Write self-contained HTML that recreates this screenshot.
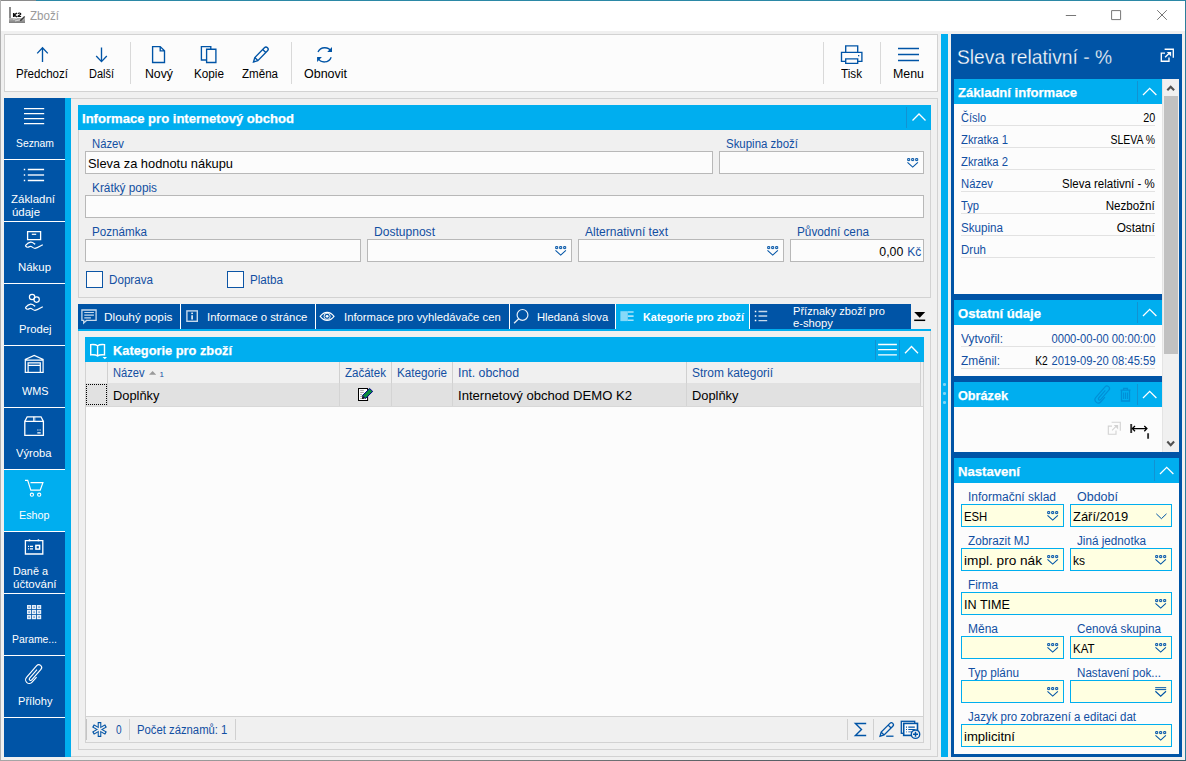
<!DOCTYPE html>
<html><head><meta charset="utf-8"><title>Zboží</title><style>html,body{margin:0;padding:0}
body{width:1186px;height:761px;overflow:hidden;position:relative;background:#f0f0f0;font-family:"Liberation Sans",sans-serif}
#w div,#w svg,#w span.t{position:absolute}
#w span.t{white-space:nowrap}
#w{position:absolute;left:0;top:0;width:1186px;height:761px;overflow:hidden}</style></head><body><div id="w"><div style="left:0px;top:0px;width:1186px;height:31px;background:#ffffff;"></div><div style="left:0px;top:0px;width:36px;height:1px;background:#8a8a8a;"></div><div style="left:36px;top:0px;width:1150px;height:1px;background:#2b88a6;"></div><div style="left:0px;top:0px;width:1px;height:761px;background:#b0b0b0;"></div><div style="left:1185px;top:0px;width:1px;height:761px;background:#2b7f9c;"></div><div style="left:0px;top:760px;width:1186px;height:1px;background:linear-gradient(90deg,#a6a6a6 0%,#8c8c8c 35%,#5c6266 60%,#3c5a68 100%);"></div><span class="t" id="t0" style="top:7.84px;font-size:12px;line-height:16px;color:#9a9a9a;left:30px;transform:scaleX(0.9662);transform-origin:0 0;">Zboží</span><svg style="left:8px;top:6px;" width="18" height="18" viewBox="0 0 18 18" fill="none"><defs><linearGradient id="kg" x1="0" y1="0" x2="0" y2="1"><stop offset="0" stop-color="#b8b8b8"/><stop offset="1" stop-color="#7c7c7c"/></linearGradient></defs><rect x="1" y="1" width="2" height="16" fill="#8a8a8a"/><rect x="1" y="12" width="16" height="5" fill="url(#kg)"/><path d="M5 13.2l4-.8M7 15l5-1.2" stroke="#e4e4e4" stroke-width=".8"/><path d="M12.3 14.8l4.4-4.4" stroke="#3a3a3a" stroke-width="1.4"/><path d="M5.700 7v4M8.900 7l-2.600 2l2.600 2" stroke="#111" stroke-width="1.500" fill="none"/><path d="M10 7.800c.5-1.100 2.800-1.100 2.800.1c0 1-2.400 1.400-2.800 2.600h3.100" stroke="#111" stroke-width="1.200" fill="none"/></svg><svg style="left:1062px;top:5px;" width="110" height="20" viewBox="0 0 110 20" fill="none"><path d="M3.800 10.500h10.300" stroke="#777" stroke-width="1"/><path d="M49.600 5.600h9v9h-9z" stroke="#777" stroke-width="1" fill="none"/><path d="M95.200 5.200l9.600 9.600M104.800 5.200l-9.600 9.600" stroke="#777" stroke-width="1"/></svg><div style="left:4px;top:34px;width:934px;height:58px;background:#fcfcfc;border:1px solid #d2d2d2;box-sizing:border-box;"></div><div style="left:130px;top:42px;width:1px;height:42px;background:#d9d9d9;"></div><div style="left:291px;top:42px;width:1px;height:42px;background:#d9d9d9;"></div><div style="left:823px;top:42px;width:1px;height:42px;background:#d9d9d9;"></div><div style="left:880px;top:42px;width:1px;height:42px;background:#d9d9d9;"></div><span class="t" id="t1" style="top:65.84px;font-size:12px;line-height:16px;color:#000;left:16px;transform:scaleX(0.9624);transform-origin:0 0;">Předchozí</span><span class="t" id="t2" style="top:65.84px;font-size:12px;line-height:16px;color:#000;left:88.5px;transform:scaleX(0.9143);transform-origin:0 0;">Další</span><span class="t" id="t3" style="top:65.84px;font-size:12px;line-height:16px;color:#000;left:145px;transform:scaleX(1.0240);transform-origin:0 0;">Nový</span><span class="t" id="t4" style="top:65.84px;font-size:12px;line-height:16px;color:#000;left:194px;transform:scaleX(0.9771);transform-origin:0 0;">Kopie</span><span class="t" id="t5" style="top:65.84px;font-size:12px;line-height:16px;color:#000;left:242px;transform:scaleX(0.9636);transform-origin:0 0;">Změna</span><span class="t" id="t6" style="top:65.84px;font-size:12px;line-height:16px;color:#000;left:303.5px;transform:scaleX(1.0397);transform-origin:0 0;">Obnovit</span><span class="t" id="t7" style="top:65.84px;font-size:12px;line-height:16px;color:#000;left:841px;transform:scaleX(0.9739);transform-origin:0 0;">Tisk</span><span class="t" id="t8" style="top:65.84px;font-size:12px;line-height:16px;color:#000;left:893px;transform:scaleX(1.0323);transform-origin:0 0;">Menu</span><svg style="left:30px;top:40px;" width="320" height="30" viewBox="0 0 320 30" fill="none"><path d="M12.5 7.6v14.3M7.2 13.4l5.3-5.6l5.3 5.6" stroke="#0054a6" stroke-width="1.35" fill="none" /><path d="M71.5 7.6v14.3M66.2 16l5.3 5.6l5.3-5.6" stroke="#0054a6" stroke-width="1.35" fill="none" /><path d="M122.6 6.6h7.6l4.3 4.2v11.7h-11.9zM130.2 6.6v4.2h4.3" stroke="#0054a6" stroke-width="1.35" fill="none" /><path d="M180.8 9v-2.4h-9.4v13.4h5M176.6 9.2h9.3v13.3h-9.3z" stroke="#0054a6" stroke-width="1.35" fill="none" /><path d="M223.5 22l1.3-4.4l9.6-9.9a2.15 2.15 0 0 1 3.1 3.1l-9.7 9.8zM224.8 17.6l3 3M232.7 9.5l3.1 3.1" stroke="#0054a6" stroke-width="1.35" fill="none" /><path d="M288 12A7.500 7.500 0 0 1 301.300 11.500M301.200 17.300A7.200 7.200 0 0 1 287.900 17.700" stroke="#0054a6" stroke-width="1.35" fill="none" /><path d="M302 7.100v4.800h-4.800z M287.100 21.900v-4.800h4.800z" fill="#0054a6"/></svg><svg style="left:836px;top:40px;" width="90" height="30" viewBox="0 0 90 30" fill="none"><path d="M9.7 12.4v-6.5h12v6.5M9.7 21.3h-4.2v-8.9h20.4v8.9h-4.2M9.7 18.8h12v4.5h-12z" stroke="#0054a6" stroke-width="1.35" fill="none" /><rect x="22" y="15" width="1.3" height="1.3" fill="#0054a6"/><path d="M62 8.5h21M62 14.5h21M62 20.5h21" stroke="#0054a6" stroke-width="1.35" fill="none" /></svg><div style="left:4px;top:98px;width:61px;height:659px;background:#0054a6;"></div><div style="left:65px;top:98px;width:6px;height:659px;background:#00aeef;"></div><div style="left:4px;top:470px;width:61px;height:61px;background:#00aeef;"></div><div style="left:4px;top:159px;width:61px;height:1px;background:#ffffff;"></div><div style="left:4px;top:221px;width:61px;height:1px;background:#ffffff;"></div><div style="left:4px;top:283px;width:61px;height:1px;background:#ffffff;"></div><div style="left:4px;top:345px;width:61px;height:1px;background:#ffffff;"></div><div style="left:4px;top:407px;width:61px;height:1px;background:#ffffff;"></div><div style="left:4px;top:469px;width:61px;height:1px;background:#ffffff;"></div><div style="left:4px;top:531px;width:61px;height:1px;background:#ffffff;"></div><div style="left:4px;top:593px;width:61px;height:1px;background:#ffffff;"></div><div style="left:4px;top:655px;width:61px;height:1px;background:#ffffff;"></div><div style="left:4px;top:717px;width:61px;height:1px;background:#ffffff;"></div><span class="t" id="t9" style="top:135.69px;font-size:11px;line-height:15px;color:#fff;left:15.7px;transform:scaleX(0.9415);transform-origin:0 0;">Seznam</span><span class="t" id="t10" style="top:192.19px;font-size:11px;line-height:15px;color:#fff;left:11.2px;transform:scaleX(1.0426);transform-origin:0 0;">Základní</span><span class="t" id="t11" style="top:205.19px;font-size:11px;line-height:15px;color:#fff;left:11.6px;transform:scaleX(1.0400);transform-origin:0 0;">údaje</span><span class="t" id="t12" style="top:259.69px;font-size:11px;line-height:15px;color:#fff;left:17.7px;transform:scaleX(1.0378);transform-origin:0 0;">Nákup</span><span class="t" id="t13" style="top:321.69px;font-size:11px;line-height:15px;color:#fff;left:18.7px;transform:scaleX(1.0221);transform-origin:0 0;">Prodej</span><span class="t" id="t14" style="top:383.69px;font-size:11px;line-height:15px;color:#fff;left:21.5px;transform:scaleX(0.9855);transform-origin:0 0;">WMS</span><span class="t" id="t15" style="top:445.69px;font-size:11px;line-height:15px;color:#fff;left:16.2px;transform:scaleX(1.0184);transform-origin:0 0;">Výroba</span><span class="t" id="t16" style="top:507.69px;font-size:11px;line-height:15px;color:#fff;left:18.7px;transform:scaleX(0.9775);transform-origin:0 0;">Eshop</span><span class="t" id="t17" style="top:564.19px;font-size:11px;line-height:15px;color:#fff;left:12.8px;transform:scaleX(0.9863);transform-origin:0 0;">Daně a</span><span class="t" id="t18" style="top:577.19px;font-size:11px;line-height:15px;color:#fff;left:13.2px;transform:scaleX(1.0458);transform-origin:0 0;">účtování</span><span class="t" id="t19" style="top:631.69px;font-size:11px;line-height:15px;color:#fff;left:11.7px;transform:scaleX(0.9436);transform-origin:0 0;">Parame...</span><span class="t" id="t20" style="top:693.69px;font-size:11px;line-height:15px;color:#fff;left:17.7px;transform:scaleX(1.0073);transform-origin:0 0;">Přílohy</span><svg style="left:4px;top:98px;" width="61" height="61" viewBox="0 0 61 61" fill="none"><path d="M20 10.6h20.2M20 15.6h20.2M20 20.6h20.2M20 25.6h20.2" stroke="#fff" stroke-width="1.4" fill="none" /></svg><svg style="left:4px;top:160px;" width="61" height="61" viewBox="0 0 61 61" fill="none"><path d="M23.8 9.5h16.3M23.8 20.5h16.3" stroke="#fff" stroke-width="1.4" fill="none" /><path d="M23.8 15h16.3" stroke="#fff" stroke-width="1.9" fill="none" stroke-opacity=".72"/><path d="M19.8 8.8h1.4v1.4h-1.4zM19.8 14.3h1.4v1.4h-1.4zM19.8 19.8h1.4v1.4h-1.4z" fill="#fff"/></svg><svg style="left:0px;top:222px;" width="66" height="61" viewBox="0 0 66 61" fill="none"><path d="M27.6 9.6h13v8h-13z" stroke="#fff" stroke-width="1.3" fill="none" /><path d="M31.800 12.300h4.400" stroke="#fff" stroke-width="1.2" fill="none" /><path d="M25.3 23.6 c1.6-1.8 3.4-3.3 5.3-3.5c2-.2 3.2 1.2 4.6 2.2 M25.3 23.6 c.9 1.3 1.9 2 3 1.5c1-.5 1.8-.9 2.8-.6c1.4.5 2.300 1.900 3.900 1.900c2.600-.2 5.200-2.400 7.800-3.700" stroke="#fff" stroke-width="1.2" fill="none" /></svg><svg style="left:0px;top:284px;" width="66" height="61" viewBox="0 0 66 61" fill="none"><circle cx="32.1" cy="13" r="2.700" stroke="#fff" stroke-width="1.200" fill="none"/><circle cx="36.600" cy="15.600" r="2.700" stroke="#fff" stroke-width="1.200" fill="none"/><path d="M25.3 23.6 c1.6-1.8 3.4-3.3 5.3-3.5c2-.2 3.2 1.2 4.6 2.2 M25.3 23.6 c.9 1.3 1.9 2 3 1.5c1-.5 1.8-.9 2.8-.6c1.4.5 2.300 1.900 3.900 1.900c2.600-.2 5.200-2.400 7.800-3.700" stroke="#fff" stroke-width="1.2" fill="none" /></svg><svg style="left:0px;top:346px;" width="66" height="61" viewBox="0 0 66 61" fill="none"><path d="M25.300 26.400v-13l8.900-3.900l8.900 3.900v13M25.300 14.100h17.800" stroke="#fff" stroke-width="1.2" fill="none" /><path d="M28.100 26.400v-9.600h12.200v9.600M28.100 19.300h12.200" stroke="#fff" stroke-width="1.2" fill="none" /><path d="M24.800 26.400h18.800" stroke="#fff" stroke-width="1.2" fill="none" /></svg><svg style="left:0px;top:408px;" width="66" height="61" viewBox="0 0 66 61" fill="none"><path d="M24.800 13.400h18.600v14h-18.600zM24.800 13.400l2.400-4.600h13.800l2.400 4.600" stroke="#fff" stroke-width="1.3" fill="none" /><path d="M33.500 8.800v4.600M34.800 8.800v4.600" stroke="#fff" stroke-width="0.8" fill="none" /><path d="M37.300 22h1.200M39.500 22h1.200M37.300 24.900h3.400" stroke="#fff" stroke-width="1.2" fill="none" /></svg><svg style="left:0px;top:470px;" width="66" height="61" viewBox="0 0 66 61" fill="none"><path d="M25 10.400h2.700l3.100 9.700h9.400l2.700-7.500h-12.400" stroke="#fff" stroke-width="1.2" fill="none" /><circle cx="31.900" cy="24.700" r="1.600" stroke="#fff" stroke-width="1.100" fill="none"/><circle cx="39.200" cy="24.700" r="1.600" stroke="#fff" stroke-width="1.100" fill="none"/></svg><svg style="left:0px;top:532px;" width="66" height="61" viewBox="0 0 66 61" fill="none"><path d="M25.400 8.700h17.400v13.300h-17.400z" stroke="#fff" stroke-width="1.3" fill="none" /><path d="M29.500 7.300v2M38.400 7.300v2" stroke="#fff" stroke-width="1.5" fill="none" /><path d="M28 14.400h1.100M30 14.400h3M28 16.900h1.100M30 16.900h3" stroke="#fff" stroke-width="1.1" fill="none" /><rect x="35.900" y="13.400" width="3.700" height="3.700" stroke="#fff" stroke-width="1.500" fill="none"/></svg><svg style="left:0px;top:594px;" width="66" height="61" viewBox="0 0 66 61" fill="none"><rect x="27" y="11" width="4.200" height="4.200" fill="#e6eef7"/><rect x="28.3" y="12.4" width="1.600" height="1.400" fill="#5f93cc"/><rect x="32" y="11" width="4.200" height="4.200" fill="#e6eef7"/><rect x="33.3" y="12.4" width="1.600" height="1.400" fill="#5f93cc"/><rect x="37" y="11" width="4.200" height="4.200" fill="#e6eef7"/><rect x="38.3" y="12.4" width="1.600" height="1.400" fill="#5f93cc"/><rect x="27" y="16" width="4.200" height="4.200" fill="#e6eef7"/><rect x="28.3" y="17.4" width="1.600" height="1.400" fill="#5f93cc"/><rect x="32" y="16" width="4.200" height="4.200" fill="#e6eef7"/><rect x="33.3" y="17.4" width="1.600" height="1.400" fill="#5f93cc"/><rect x="37" y="16" width="4.200" height="4.200" fill="#e6eef7"/><rect x="38.3" y="17.4" width="1.600" height="1.400" fill="#5f93cc"/><rect x="27" y="21" width="4.200" height="4.200" fill="#e6eef7"/><rect x="28.3" y="22.4" width="1.600" height="1.400" fill="#5f93cc"/><rect x="32" y="21" width="4.200" height="4.200" fill="#e6eef7"/><rect x="33.3" y="22.4" width="1.600" height="1.400" fill="#5f93cc"/><rect x="37" y="21" width="4.200" height="4.200" fill="#e6eef7"/><rect x="38.3" y="22.4" width="1.600" height="1.400" fill="#5f93cc"/></svg><svg style="left:0px;top:656px;" width="66" height="61" viewBox="0 0 66 61" fill="none"><g transform="translate(34.100 18.300) rotate(41)"><path d="M3.700 0.500V7.300A3.700 3.700 0 0 1 -3.700 7.300V-8.200A2.800 2.800 0 0 1 1.900 -8.200V5.800A1.400 1.400 0 0 1 -0.900 5.800V-5.500" stroke="#fff" stroke-width="1.15" fill="none" /></g></svg><div style="left:71px;top:98px;width:867px;height:659px;background:#f0f0f0;border:1px solid #d2d2d2;box-sizing:border-box;border-left:none;"></div><div style="left:941px;top:34px;width:7px;height:723px;background:#00aeef;"></div><div style="left:78px;top:105px;width:853px;height:193px;background:#f0f0f0;border:1px solid #d2d2d2;box-sizing:border-box;"></div><div style="left:78px;top:105px;width:853px;height:25px;background:#00aeef;"></div><span class="t" id="t21" style="top:110.00px;font-size:13px;line-height:17px;color:#fff;font-weight:700;left:82px;transform:scaleX(1.0051);transform-origin:0 0;-webkit-text-stroke:.25px #fff;">Informace pro internetový obchod</span><div style="left:906px;top:107px;width:1px;height:21px;background:#1292d2;"></div><svg style="left:910.6px;top:111.4px;" width="16" height="12" viewBox="0 0 16 12" fill="none"><path d="M1.5 9.5l6.5-6.5l6.5 6.5" stroke="#fff" stroke-width="1.3" fill="none"/></svg><span class="t" id="t22" style="top:135.84px;font-size:12px;line-height:16px;color:#124fa2;left:92px;transform:scaleX(0.9407);transform-origin:0 0;">Název</span><div style="left:85px;top:151px;width:628px;height:23px;background:#fcfcfc;border:1px solid #b8b8b8;box-sizing:border-box;"></div><span class="t" id="t23" style="top:155.00px;font-size:13px;line-height:17px;color:#000;left:88px;transform:scaleX(0.9882);transform-origin:0 0;">Sleva za hodnotu nákupu</span><span class="t" id="t24" style="top:135.84px;font-size:12px;line-height:16px;color:#124fa2;left:726px;transform:scaleX(0.9550);transform-origin:0 0;">Skupina zboží</span><div style="left:719px;top:151px;width:205px;height:23px;background:#fcfcfc;border:1px solid #b8b8b8;box-sizing:border-box;"></div><svg style="left:907px;top:158px;" width="12" height="10" viewBox="0 0 12 10" fill="none"><path d="M0.700 0.600h2v2h-2zM4.700 0.600h2v2h-2zM8.700 0.600h2v2h-2z" stroke="#0054a6" stroke-width="1" fill="#dfe9f5"/><path d="M0.500 4.400l5.200 4.700l5.200-4.700" stroke="#0054a6" stroke-width="1.100" fill="none"/></svg><span class="t" id="t25" style="top:179.84px;font-size:12px;line-height:16px;color:#124fa2;left:92px;transform:scaleX(0.9844);transform-origin:0 0;">Krátký popis</span><div style="left:85px;top:195px;width:839px;height:23px;background:#fcfcfc;border:1px solid #b8b8b8;box-sizing:border-box;"></div><span class="t" id="t26" style="top:223.84px;font-size:12px;line-height:16px;color:#124fa2;left:92px;transform:scaleX(0.9700);transform-origin:0 0;">Poznámka</span><div style="left:85px;top:239px;width:276px;height:23px;background:#fcfcfc;border:1px solid #b8b8b8;box-sizing:border-box;"></div><span class="t" id="t27" style="top:223.84px;font-size:12px;line-height:16px;color:#124fa2;left:374px;transform:scaleX(1.0049);transform-origin:0 0;">Dostupnost</span><div style="left:367px;top:239px;width:205px;height:23px;background:#fcfcfc;border:1px solid #b8b8b8;box-sizing:border-box;"></div><svg style="left:555px;top:246px;" width="12" height="10" viewBox="0 0 12 10" fill="none"><path d="M0.700 0.600h2v2h-2zM4.700 0.600h2v2h-2zM8.700 0.600h2v2h-2z" stroke="#0054a6" stroke-width="1" fill="#dfe9f5"/><path d="M0.500 4.400l5.200 4.700l5.200-4.700" stroke="#0054a6" stroke-width="1.100" fill="none"/></svg><span class="t" id="t28" style="top:223.84px;font-size:12px;line-height:16px;color:#124fa2;left:585px;transform:scaleX(1.0034);transform-origin:0 0;">Alternativní text</span><div style="left:578px;top:239px;width:206px;height:23px;background:#fcfcfc;border:1px solid #b8b8b8;box-sizing:border-box;"></div><svg style="left:767px;top:246px;" width="12" height="10" viewBox="0 0 12 10" fill="none"><path d="M0.700 0.600h2v2h-2zM4.700 0.600h2v2h-2zM8.700 0.600h2v2h-2z" stroke="#0054a6" stroke-width="1" fill="#dfe9f5"/><path d="M0.500 4.400l5.200 4.700l5.200-4.700" stroke="#0054a6" stroke-width="1.100" fill="none"/></svg><span class="t" id="t29" style="top:223.84px;font-size:12px;line-height:16px;color:#124fa2;left:797px;transform:scaleX(0.9811);transform-origin:0 0;">Původní cena</span><div style="left:790px;top:239px;width:134px;height:23px;background:#fcfcfc;border:1px solid #b8b8b8;box-sizing:border-box;"></div><span class="t" id="t30" style="top:243.00px;font-size:13px;line-height:17px;color:#000;right:283px;transform:scaleX(0.9481);transform-origin:100% 0;">0,00</span><span class="t" id="t31" style="top:243.00px;font-size:13px;line-height:17px;color:#124fa2;right:265px;transform:scaleX(0.9228);transform-origin:100% 0;">Kč</span><div style="left:86px;top:271px;width:17px;height:17px;background:#fcfcfc;border:1px solid #0c55a5;box-sizing:border-box;"></div><span class="t" id="t32" style="top:271.84px;font-size:12px;line-height:16px;color:#124fa2;left:109px;transform:scaleX(0.9700);transform-origin:0 0;">Doprava</span><div style="left:227px;top:271px;width:17px;height:17px;background:#fcfcfc;border:1px solid #0c55a5;box-sizing:border-box;"></div><span class="t" id="t33" style="top:271.84px;font-size:12px;line-height:16px;color:#124fa2;left:250px;transform:scaleX(0.9697);transform-origin:0 0;">Platba</span><div style="left:78px;top:304px;width:833px;height:25px;background:#0054a6;"></div><div style="left:78px;top:329px;width:853px;height:2px;background:#00aeef;"></div><div style="left:180px;top:304px;width:1px;height:25px;background:#ffffff;"></div><div style="left:315px;top:304px;width:1px;height:25px;background:#ffffff;"></div><div style="left:509px;top:304px;width:1px;height:25px;background:#ffffff;"></div><div style="left:615px;top:304px;width:1px;height:25px;background:#ffffff;"></div><div style="left:749px;top:304px;width:1px;height:25px;background:#ffffff;"></div><div style="left:616px;top:304px;width:133px;height:25px;background:#00aeef;"></div><span class="t" id="t34" style="top:310.27px;font-size:11.5px;line-height:15.5px;color:#fff;left:104.3px;transform:scaleX(1.0303);transform-origin:0 0;">Dlouhý popis</span><span class="t" id="t35" style="top:310.27px;font-size:11.5px;line-height:15.5px;color:#fff;left:207.4px;transform:scaleX(0.9878);transform-origin:0 0;">Informace o stránce</span><span class="t" id="t36" style="top:310.27px;font-size:11.5px;line-height:15.5px;color:#fff;left:344.2px;transform:scaleX(0.9805);transform-origin:0 0;">Informace pro vyhledávače cen</span><span class="t" id="t37" style="top:310.27px;font-size:11.5px;line-height:15.5px;color:#fff;left:536.6px;transform:scaleX(0.9768);transform-origin:0 0;">Hledaná slova</span><span class="t" id="t38" style="top:309.87px;font-size:11.5px;line-height:15.5px;color:#fff;font-weight:700;left:642.5px;transform:scaleX(0.9466);transform-origin:0 0;">Kategorie pro zboží</span><div style="left:750px;top:304px;width:161px;height:25px;overflow:hidden"><span class="t" id="t39" style="top:-0.23px;font-size:11.5px;line-height:15.5px;color:#fff;left:42.6px;transform:scaleX(0.9660);transform-origin:0 0;">Příznaky zboží pro</span><span class="t" id="t40" style="top:12.07px;font-size:11.5px;line-height:15.5px;color:#fff;left:42.6px;transform:scaleX(0.9775);transform-origin:0 0;">e-shopy</span></div><svg style="left:913px;top:311px;" width="14" height="12" viewBox="0 0 14 12" fill="none"><path d="M1.200 1.100h11l-5.500 5.700z" fill="#000"/><path d="M1.200 9.300h11" stroke="#000" stroke-width="1.500"/></svg><svg style="left:78px;top:304px;" width="60" height="25" viewBox="0 0 60 25" fill="none"><path d="M3.900 6h14.200v10.400h-9.600l-2.800 2.600v-2.600h-1.800z" stroke="rgba(255,255,255,.78)" stroke-width="1.300" fill="none"/><path d="M6.300 8.500h9.600M6.300 11.200h9.600M6.300 13.900h6.600" stroke="rgba(255,255,255,.78)" stroke-width="1.200"/></svg><svg style="left:180px;top:304px;" width="40" height="25" viewBox="0 0 40 25" fill="none"><rect x="6.900" y="6.900" width="10.400" height="10.400" stroke="rgba(255,255,255,.78)" stroke-width="1.400" fill="none"/><path d="M12.100 9h0M12.100 11.200v4.200" stroke="#fff" stroke-width="1.500"/><rect x="11.350" y="8.600" width="1.500" height="1.500" fill="#fff"/></svg><svg style="left:316px;top:304px;" width="30" height="25" viewBox="0 0 30 25" fill="none"><path d="M4.200 12.300c2.200-2.900 4.500-4 6.900-4s4.700 1.100 6.900 4c-2.200 2.900-4.500 4-6.900 4s-4.700-1.100-6.900-4z" stroke="#fff" stroke-width="1.200" fill="none"/><circle cx="11.100" cy="12.300" r="3.100" stroke="#fff" stroke-width=".9" fill="none"/><circle cx="11.100" cy="12.300" r="1.400" fill="#fff"/></svg><svg style="left:510px;top:304px;" width="30" height="25" viewBox="0 0 30 25" fill="none"><circle cx="12.500" cy="10.900" r="5.400" stroke="#fff" stroke-width="1.200" fill="none" stroke-opacity=".9"/><path d="M8.700 14.800l-4.600 4.500" stroke="#fff" stroke-width="1.300" stroke-opacity=".9"/></svg><svg style="left:616px;top:304px;" width="30" height="25" viewBox="0 0 30 25" fill="none"><rect x="4.400" y="7.200" width="7.400" height="9.900" fill="#86d9f8"/><path d="M11.800 8h5.800M11.800 12.100h5.800M11.800 16.300h5.800" stroke="#a8e3fa" stroke-width="1.600"/></svg><svg style="left:750px;top:304px;" width="30" height="25" viewBox="0 0 30 25" fill="none"><path d="M8.500 7.500h8.700M8.500 12h8.700M8.500 16.600h8.700" stroke="rgba(255,255,255,.78)" stroke-width="1.400"/><path d="M4.800 6.800h1.500v1.500h-1.500zM4.800 11.300h1.500v1.500h-1.500zM4.800 15.800h1.500v1.500h-1.500z" fill="#fff"/></svg><div style="left:78px;top:331px;width:853px;height:419px;background:#f0f0f0;border:1px solid #d2d2d2;box-sizing:border-box;border-top:none;"></div><div style="left:85px;top:337px;width:839px;height:406px;background:#fcfcfc;border:1px solid #d2d2d2;box-sizing:border-box;"></div><div style="left:85px;top:337px;width:839px;height:25px;background:#00aeef;"></div><span class="t" id="t41" style="top:341.60px;font-size:13px;line-height:17px;color:#fff;font-weight:700;left:112.8px;transform:scaleX(0.9865);transform-origin:0 0;-webkit-text-stroke:.25px #fff;">Kategorie pro zboží</span><svg style="left:88px;top:340px;" width="22" height="22" viewBox="0 0 22 22" fill="none"><path d="M9.600 5.700c-1.600-1.200-4-1.400-6.900-1.100v10.300c2.900-.3 5.300-.1 6.900 1.100c1.600-1.200 4-1.400 6.900-1.100v-10.300c-2.900-.3-5.300-.1-6.900 1.100zM9.600 5.700v10.300" stroke="#fff" stroke-width="1.400" fill="none"/><path d="M14.600 17h4.400l-2.200 2.300z" fill="#fff"/></svg><div style="left:875px;top:340px;width:1px;height:20px;background:#1292d2;"></div><div style="left:899px;top:340px;width:1px;height:20px;background:#1292d2;"></div><svg style="left:876px;top:338px;" width="24" height="24" viewBox="0 0 24 24" fill="none"><path d="M2.100 6.500h18.800M2.100 11.700h18.800M2.100 16.800h18.800" stroke="#fff" stroke-width="1.300"/></svg><svg style="left:900px;top:338px;" width="24" height="24" viewBox="0 0 24 24" fill="none"><path d="M5 15.300l6.500-6.800l6.500 6.800" stroke="#fff" stroke-width="1.300" fill="none"/></svg><div style="left:86px;top:362px;width:835px;height:21px;background:#f0f0f0;"></div><div style="left:86px;top:383px;width:835px;height:22.5px;background:#e1e1e1;"></div><div style="left:86px;top:405.5px;width:837px;height:1px;background:#d8d8d8;"></div><div style="left:107px;top:362px;width:1px;height:21px;background:#d0d0d0;"></div><div style="left:107px;top:383px;width:1px;height:22.5px;background:#d4d4d4;"></div><div style="left:339px;top:362px;width:1px;height:21px;background:#d0d0d0;"></div><div style="left:339px;top:383px;width:1px;height:22.5px;background:#d4d4d4;"></div><div style="left:391px;top:362px;width:1px;height:21px;background:#d0d0d0;"></div><div style="left:391px;top:383px;width:1px;height:22.5px;background:#d4d4d4;"></div><div style="left:452px;top:362px;width:1px;height:21px;background:#d0d0d0;"></div><div style="left:452px;top:383px;width:1px;height:22.5px;background:#d4d4d4;"></div><div style="left:686px;top:362px;width:1px;height:21px;background:#d0d0d0;"></div><div style="left:686px;top:383px;width:1px;height:22.5px;background:#d4d4d4;"></div><div style="left:920px;top:362px;width:1px;height:21px;background:#d0d0d0;"></div><div style="left:920px;top:383px;width:1px;height:22.5px;background:#d4d4d4;"></div><div style="left:921px;top:362px;width:2px;height:44px;background:#f0f0f0;"></div><span class="t" id="t42" style="top:364.84px;font-size:12px;line-height:16px;color:#124fa2;left:113.4px;transform:scaleX(0.9290);transform-origin:0 0;">Název</span><svg style="left:148px;top:369px;" width="10" height="8" viewBox="0 0 10 8" fill="none"><path d="M1 5.700l3.600-3.700l3.600 3.700z" fill="#9a9a9a"/></svg><span class="t" id="t43" style="top:368.73px;font-size:8px;line-height:12px;color:#124fa2;left:159.6px;">1</span><span class="t" id="t44" style="top:364.84px;font-size:12px;line-height:16px;color:#124fa2;left:345.2px;transform:scaleX(0.9605);transform-origin:0 0;">Začátek</span><span class="t" id="t45" style="top:364.84px;font-size:12px;line-height:16px;color:#124fa2;left:397.4px;transform:scaleX(0.9732);transform-origin:0 0;">Kategorie</span><span class="t" id="t46" style="top:364.84px;font-size:12px;line-height:16px;color:#124fa2;left:458.1px;transform:scaleX(1.0271);transform-origin:0 0;">Int. obchod</span><span class="t" id="t47" style="top:364.84px;font-size:12px;line-height:16px;color:#124fa2;left:692px;transform:scaleX(0.9954);transform-origin:0 0;">Strom kategorií</span><span class="t" id="t48" style="top:386.80px;font-size:13px;line-height:17px;color:#000;left:113.4px;transform:scaleX(0.9879);transform-origin:0 0;">Doplňky</span><span class="t" id="t49" style="top:386.80px;font-size:13px;line-height:17px;color:#000;left:458.1px;transform:scaleX(1.0075);transform-origin:0 0;">Internetový obchod DEMO K2</span><span class="t" id="t50" style="top:386.80px;font-size:13px;line-height:17px;color:#000;left:692px;transform:scaleX(0.9879);transform-origin:0 0;">Doplňky</span><div style="left:86px;top:384px;width:21px;height:21px;border:1px dotted #000;box-sizing:border-box;"></div><svg style="left:356px;top:386px;" width="20" height="17" viewBox="0 0 20 17" fill="none"><rect x="2.500" y="2.500" width="9.100" height="12" fill="#fff" stroke="#000" stroke-width="1"/><path d="M4.200 4.400h3.600M4.200 6.400h3.600M4.200 8.400h2M4.200 10.400h2M4.200 12.400h4" stroke="#8a8a8a" stroke-width=".8"/><path d="M13.600 2.500l3.100 2.900l-7.200 7.100l-3.100-2.900z" fill="#0a8a3c" stroke="#00008b" stroke-width="1"/><path d="M6.200 9.700l2.700 2.800l-2.800.4z" fill="#000"/></svg><div style="left:86px;top:716px;width:837px;height:26px;background:#f0f0f0;"></div><div style="left:86px;top:716px;width:837px;height:1px;background:#d2d2d2;"></div><div style="left:129px;top:719px;width:1px;height:21px;background:#d0d0d0;"></div><div style="left:235px;top:719px;width:1px;height:21px;background:#d0d0d0;"></div><div style="left:847px;top:719px;width:1px;height:21px;background:#d0d0d0;"></div><div style="left:873px;top:719px;width:1px;height:21px;background:#d0d0d0;"></div><div style="left:86px;top:719px;width:1px;height:21px;background:#c4c4c4;"></div><span class="t" id="t51" style="top:721.84px;font-size:12px;line-height:16px;color:#124fa2;left:116.4px;transform:scaleX(0.8374);transform-origin:0 0;">0</span><span class="t" id="t52" style="top:721.84px;font-size:12px;line-height:16px;color:#124fa2;left:136.6px;transform:scaleX(0.9411);transform-origin:0 0;">Počet záznamů: 1</span><svg style="left:89px;top:719px;" width="22" height="22" viewBox="0 0 22 22" fill="none"><path d="M10.50 3.00L10.50 18.00" stroke="#0054a6" stroke-width="3.6" stroke-linecap="butt"/><path d="M17.00 6.75L4.00 14.25" stroke="#0054a6" stroke-width="3.6" stroke-linecap="butt"/><path d="M17.00 14.25L4.00 6.75" stroke="#0054a6" stroke-width="3.6" stroke-linecap="butt"/><path d="M10.50 4.20L10.50 16.80" stroke="#f0f0f0" stroke-width="1.5" stroke-linecap="butt"/><path d="M15.96 7.35L5.04 13.65" stroke="#f0f0f0" stroke-width="1.5" stroke-linecap="butt"/><path d="M15.96 13.65L5.04 7.35" stroke="#f0f0f0" stroke-width="1.5" stroke-linecap="butt"/></svg><svg style="left:850px;top:718px;" width="75" height="24" viewBox="0 0 75 24" fill="none"><path d="M16.200 5.500h-10.800l6.100 6l-6.100 6h10.800" stroke="#0054a6" stroke-width="1.400" fill="none"/><path d="M30 18.200l1.200-4.100l8.700-8.700a2 2 0 0 1 2.900 2.900l-8.700 8.700zM31.200 14.100l2.900 2.900M38.200 7.100l2.900 2.900" stroke="#0054a6" stroke-width="1.300" fill="none"/><path d="M36.200 18.200h7.300" stroke="#0054a6" stroke-width="1.300"/><rect x="51.300" y="3.300" width="13.400" height="12" fill="#f6f6f6" stroke="#0054a6" stroke-width="1.300"/><rect x="53.700" y="5.400" width="13.800" height="12" fill="#fafafa" stroke="#0054a6" stroke-width="1.600"/><path d="M58.300 9.200h6.500M58.300 11.500h6.500" stroke="#0054a6" stroke-width="1.200"/><path d="M58.300 13.800h6.500" stroke="#6d9fd4" stroke-width="1.400"/><path d="M56 9.200h1M56 11.500h1" stroke="#0054a6" stroke-width="1.200"/><path d="M56 13.800h1" stroke="#6d9fd4" stroke-width="1.200"/><circle cx="65.500" cy="16.200" r="4.200" fill="#f4f4f4" stroke="#0054a6" stroke-width="1.400"/><path d="M63 16.200h5M65.500 13.700v5" stroke="#0054a6" stroke-width="1.500"/></svg><div style="left:951px;top:34px;width:231px;height:723px;background:#0054a6;"></div><span class="t" id="t53" style="top:45.07px;font-size:20px;line-height:24px;color:#fff;left:957px;transform:scaleX(0.9617);transform-origin:0 0;-webkit-text-stroke:.3px #0054a6;">Sleva relativní - %</span><svg style="left:1159.9px;top:47.8px;" width="15" height="15" viewBox="0 0 15 15" fill="none"><path d="M4.600 1.200H13.300V9.700M5 5.100H1.300V13.200H9V9.600" stroke="#fff" stroke-width="1.35" fill="none"/><path d="M5.100 9.300L9.500 4.900" stroke="#fff" stroke-width="1.35"/><path d="M6.800 4.100h4.300v4.300z" fill="#fff"/></svg><div style="left:943.4px;top:383.3px;width:2.6px;height:2.6px;background:#7fd6f7;border-radius:50%;"></div><div style="left:943.4px;top:392.3px;width:2.6px;height:2.6px;background:#7fd6f7;border-radius:50%;"></div><div style="left:943.4px;top:401.3px;width:2.6px;height:2.6px;background:#7fd6f7;border-radius:50%;"></div><div style="left:954px;top:79px;width:225px;height:373px;background:#fcfcfc;"></div><div style="left:954px;top:79px;width:208px;height:25px;background:#00aeef;"></div><span class="t" id="t54" style="top:83.60px;font-size:13px;line-height:17px;color:#fff;font-weight:700;left:958px;transform:scaleX(1.0044);transform-origin:0 0;-webkit-text-stroke:.25px #fff;">Základní informace</span><div style="left:1137px;top:81px;width:1px;height:21px;background:#1292d2;"></div><svg style="left:1142px;top:86px;" width="16" height="12" viewBox="0 0 16 12" fill="none"><path d="M1 9l6.700-6.700l6.700 6.700" stroke="#fff" stroke-width="1.300" fill="none"/></svg><span class="t" id="t55" style="top:109.84px;font-size:12px;line-height:16px;color:#124fa2;left:961px;transform:scaleX(0.9143);transform-origin:0 0;">Číslo</span><span class="t" id="t56" style="top:109.84px;font-size:12px;line-height:16px;color:#000;right:31px;transform:scaleX(0.8982);transform-origin:100% 0;">20</span><div style="left:961px;top:125px;width:194px;height:1px;background:#e2e2e2;"></div><span class="t" id="t57" style="top:131.84px;font-size:12px;line-height:16px;color:#124fa2;left:961px;transform:scaleX(0.9397);transform-origin:0 0;">Zkratka 1</span><span class="t" id="t58" style="top:131.84px;font-size:12px;line-height:16px;color:#000;right:31px;transform:scaleX(0.8721);transform-origin:100% 0;">SLEVA %</span><div style="left:961px;top:147px;width:194px;height:1px;background:#e2e2e2;"></div><span class="t" id="t59" style="top:153.84px;font-size:12px;line-height:16px;color:#124fa2;left:961px;transform:scaleX(0.9397);transform-origin:0 0;">Zkratka 2</span><div style="left:961px;top:169px;width:194px;height:1px;background:#e2e2e2;"></div><span class="t" id="t60" style="top:175.84px;font-size:12px;line-height:16px;color:#124fa2;left:961px;transform:scaleX(0.9407);transform-origin:0 0;">Název</span><span class="t" id="t61" style="top:175.84px;font-size:12px;line-height:16px;color:#000;right:31px;transform:scaleX(0.9576);transform-origin:100% 0;">Sleva relativní - %</span><div style="left:961px;top:191px;width:194px;height:1px;background:#e2e2e2;"></div><span class="t" id="t62" style="top:197.84px;font-size:12px;line-height:16px;color:#124fa2;left:961px;transform:scaleX(0.9305);transform-origin:0 0;">Typ</span><span class="t" id="t63" style="top:197.84px;font-size:12px;line-height:16px;color:#000;right:31px;transform:scaleX(0.9664);transform-origin:100% 0;">Nezbožní</span><div style="left:961px;top:213px;width:194px;height:1px;background:#e2e2e2;"></div><span class="t" id="t64" style="top:219.84px;font-size:12px;line-height:16px;color:#124fa2;left:961px;transform:scaleX(0.9683);transform-origin:0 0;">Skupina</span><span class="t" id="t65" style="top:219.84px;font-size:12px;line-height:16px;color:#000;right:31px;transform:scaleX(0.9822);transform-origin:100% 0;">Ostatní</span><div style="left:961px;top:235px;width:194px;height:1px;background:#e2e2e2;"></div><span class="t" id="t66" style="top:241.84px;font-size:12px;line-height:16px;color:#124fa2;left:961px;transform:scaleX(0.9610);transform-origin:0 0;">Druh</span><div style="left:961px;top:257px;width:194px;height:1px;background:#e2e2e2;"></div><div style="left:954px;top:294px;width:208px;height:6px;background:#0054a6;"></div><div style="left:954px;top:300px;width:208px;height:25px;background:#00aeef;"></div><span class="t" id="t67" style="top:304.60px;font-size:13px;line-height:17px;color:#fff;font-weight:700;left:958px;transform:scaleX(1.0078);transform-origin:0 0;-webkit-text-stroke:.25px #fff;">Ostatní údaje</span><div style="left:1137px;top:302px;width:1px;height:21px;background:#1292d2;"></div><svg style="left:1142px;top:307px;" width="16" height="12" viewBox="0 0 16 12" fill="none"><path d="M1 9l6.700-6.700l6.700 6.700" stroke="#fff" stroke-width="1.300" fill="none"/></svg><span class="t" id="t68" style="top:331.14px;font-size:12px;line-height:16px;color:#124fa2;left:961px;transform:scaleX(0.9945);transform-origin:0 0;">Vytvořil:</span><span class="t" id="t69" style="top:331.14px;font-size:12px;line-height:16px;color:#124fa2;right:31px;transform:scaleX(0.9333);transform-origin:100% 0;">0000-00-00 00:00:00</span><div style="left:961px;top:346px;width:194px;height:1px;background:#e2e2e2;"></div><span class="t" id="t70" style="top:353.14px;font-size:12px;line-height:16px;color:#124fa2;left:961px;transform:scaleX(0.9913);transform-origin:0 0;">Změnil:</span><span class="t" id="t71" style="top:353.14px;font-size:12px;line-height:16px;color:#124fa2;right:31px;transform:scaleX(0.9333);transform-origin:100% 0;">2019-09-20 08:45:59</span><span class="t" id="t72" style="top:353.14px;font-size:12px;line-height:16px;color:#000;right:138px;transform:scaleX(0.8511);transform-origin:100% 0;">K2</span><div style="left:961px;top:368px;width:194px;height:1px;background:#e2e2e2;"></div><div style="left:954px;top:376px;width:208px;height:6px;background:#0054a6;"></div><div style="left:954px;top:382px;width:208px;height:25px;background:#00aeef;"></div><span class="t" id="t73" style="top:386.60px;font-size:13px;line-height:17px;color:#fff;font-weight:700;left:958px;transform:scaleX(0.9744);transform-origin:0 0;-webkit-text-stroke:.25px #fff;">Obrázek</span><div style="left:1137px;top:384px;width:1px;height:21px;background:#1292d2;"></div><svg style="left:1142px;top:389px;" width="16" height="12" viewBox="0 0 16 12" fill="none"><path d="M1 9l6.700-6.700l6.700 6.700" stroke="#fff" stroke-width="1.300" fill="none"/></svg><svg style="left:1090px;top:382px;" width="45" height="25" viewBox="0 0 45 25" fill="none"><g transform="translate(12.700 12.600) rotate(41)"><path d="M3.700 0.500V7.300A3.700 3.700 0 0 1 -3.700 7.300V-8.200A2.800 2.800 0 0 1 1.900 -8.200V5.800A1.400 1.400 0 0 1 -0.900 5.800V-5.500" stroke="rgba(0,84,166,.34)" stroke-width="1.300" fill="none" transform="scale(.9)"/></g><path d="M30.500 8.200h10M33.600 8v-1.600h3.800v1.600M31.500 8.500v10.500h8v-10.500" stroke="rgba(0,84,166,.34)" stroke-width="1.300" fill="none"/><path d="M33.600 10.500v6.500M35.500 10.500v6.500M37.400 10.500v6.500" stroke="rgba(0,84,166,.34)" stroke-width="1.100"/></svg><svg style="left:1107.2px;top:421.3px;" width="15" height="15" viewBox="0 0 15 15" fill="none"><path d="M4.600 1.200H13.300V9.700M5 5.100H1.300V13.200H9V9.600" stroke="#d2d2d2" stroke-width="1.1" fill="none"/><path d="M5.100 9.300L9.500 4.900" stroke="#d2d2d2" stroke-width="1.1"/><path d="M6.800 4.100h4.300v4.300z" fill="#d2d2d2"/></svg><svg style="left:1128px;top:420px;" width="24" height="22" viewBox="0 0 24 22" fill="none"><path d="M3.200 3.900v9M20.100 13.200v5.600" stroke="#333" stroke-width="1.900"/><path d="M4.300 8.600h14.600M7 6l-2.600 2.600l2.600 2.600M16.300 6l2.600 2.600l-2.600 2.600" stroke="#000" stroke-width="1.300" fill="none"/></svg><div style="left:1162px;top:79px;width:17px;height:373px;background:#f0f0f0;"></div><div style="left:1162px;top:79px;width:1px;height:373px;background:#e4e4e4;"></div><div style="left:1163.5px;top:96px;width:14.5px;height:258px;background:#c1c1c1;"></div><svg style="left:1165px;top:82px;" width="12" height="12" viewBox="0 0 12 12" fill="none"><path d="M2.300 8.300l3.400-3.600l3.400 3.600" stroke="#505050" stroke-width="2.100" fill="none"/></svg><svg style="left:1165px;top:438px;" width="12" height="12" viewBox="0 0 12 12" fill="none"><path d="M2.300 3.500l3.400 3.600l3.400-3.600" stroke="#505050" stroke-width="2.100" fill="none"/></svg><div style="left:954px;top:458px;width:225px;height:296px;background:#fcfcfc;"></div><div style="left:954px;top:458px;width:225px;height:25px;background:#00aeef;"></div><span class="t" id="t74" style="top:462.60px;font-size:13px;line-height:17px;color:#fff;font-weight:700;left:958px;transform:scaleX(1.0094);transform-origin:0 0;-webkit-text-stroke:.25px #fff;">Nastavení</span><div style="left:1154px;top:460px;width:1px;height:21px;background:#1292d2;"></div><svg style="left:1159px;top:465px;" width="16" height="12" viewBox="0 0 16 12" fill="none"><path d="M1 9l6.700-6.700l6.700 6.700" stroke="#fff" stroke-width="1.300" fill="none"/></svg><span class="t" id="t75" style="top:489.04px;font-size:12px;line-height:16px;color:#124fa2;left:968px;transform:scaleX(0.9995);transform-origin:0 0;">Informační sklad</span><div style="left:961px;top:504px;width:103px;height:23px;background:#ffffe1;border:1px solid #00aeef;box-sizing:border-box;"></div><span class="t" id="t76" style="top:508.00px;font-size:13px;line-height:17px;color:#000;left:964px;transform:scaleX(0.8715);transform-origin:0 0;">ESH</span><svg style="left:1047px;top:511px;" width="12" height="10" viewBox="0 0 12 10" fill="none"><path d="M0.700 0.600h2v2h-2zM4.700 0.600h2v2h-2zM8.700 0.600h2v2h-2z" stroke="#0054a6" stroke-width="1" fill="#dfe9f5"/><path d="M0.500 4.400l5.200 4.700l5.200-4.700" stroke="#0054a6" stroke-width="1.100" fill="none"/></svg><span class="t" id="t77" style="top:489.04px;font-size:12px;line-height:16px;color:#124fa2;left:1077px;transform:scaleX(1.0413);transform-origin:0 0;">Období</span><div style="left:1070px;top:504px;width:102px;height:23px;background:#ffffe1;border:1px solid #00aeef;box-sizing:border-box;"></div><span class="t" id="t78" style="top:508.00px;font-size:13px;line-height:17px;color:#000;left:1073px;transform:scaleX(0.9936);transform-origin:0 0;">Září/2019</span><svg style="left:1155px;top:511px;" width="14" height="10" viewBox="0 0 14 10" fill="none"><path d="M1.300 2.800l5.100 4.900l5.100-4.900" stroke="#0054a6" stroke-width="1" fill="none"/></svg><span class="t" id="t79" style="top:533.04px;font-size:12px;line-height:16px;color:#124fa2;left:968px;transform:scaleX(0.9779);transform-origin:0 0;">Zobrazit MJ</span><div style="left:961px;top:548px;width:103px;height:23px;background:#ffffe1;border:1px solid #00aeef;box-sizing:border-box;"></div><span class="t" id="t80" style="top:552.00px;font-size:13px;line-height:17px;color:#000;left:964px;transform:scaleX(1.0481);transform-origin:0 0;">impl. pro nák</span><svg style="left:1047px;top:555px;" width="12" height="10" viewBox="0 0 12 10" fill="none"><path d="M0.700 0.600h2v2h-2zM4.700 0.600h2v2h-2zM8.700 0.600h2v2h-2z" stroke="#0054a6" stroke-width="1" fill="#dfe9f5"/><path d="M0.500 4.400l5.200 4.700l5.200-4.700" stroke="#0054a6" stroke-width="1.100" fill="none"/></svg><span class="t" id="t81" style="top:533.04px;font-size:12px;line-height:16px;color:#124fa2;left:1077px;transform:scaleX(0.9757);transform-origin:0 0;">Jiná jednotka</span><div style="left:1070px;top:548px;width:102px;height:23px;background:#ffffe1;border:1px solid #00aeef;box-sizing:border-box;"></div><span class="t" id="t82" style="top:552.00px;font-size:13px;line-height:17px;color:#000;left:1073px;transform:scaleX(0.9231);transform-origin:0 0;">ks</span><svg style="left:1155px;top:555px;" width="12" height="10" viewBox="0 0 12 10" fill="none"><path d="M0.700 0.600h2v2h-2zM4.700 0.600h2v2h-2zM8.700 0.600h2v2h-2z" stroke="#0054a6" stroke-width="1" fill="#dfe9f5"/><path d="M0.500 4.400l5.200 4.700l5.200-4.700" stroke="#0054a6" stroke-width="1.100" fill="none"/></svg><span class="t" id="t83" style="top:577.04px;font-size:12px;line-height:16px;color:#124fa2;left:968px;transform:scaleX(0.9781);transform-origin:0 0;">Firma</span><div style="left:961px;top:592px;width:211px;height:23px;background:#ffffe1;border:1px solid #00aeef;box-sizing:border-box;"></div><span class="t" id="t84" style="top:596.00px;font-size:13px;line-height:17px;color:#000;left:964px;transform:scaleX(0.9697);transform-origin:0 0;">IN TIME</span><svg style="left:1155px;top:599px;" width="12" height="10" viewBox="0 0 12 10" fill="none"><path d="M0.700 0.600h2v2h-2zM4.700 0.600h2v2h-2zM8.700 0.600h2v2h-2z" stroke="#0054a6" stroke-width="1" fill="#dfe9f5"/><path d="M0.500 4.400l5.200 4.700l5.200-4.700" stroke="#0054a6" stroke-width="1.100" fill="none"/></svg><span class="t" id="t85" style="top:621.04px;font-size:12px;line-height:16px;color:#124fa2;left:968px;transform:scaleX(0.9990);transform-origin:0 0;">Měna</span><div style="left:961px;top:636px;width:103px;height:23px;background:#ffffe1;border:1px solid #00aeef;box-sizing:border-box;"></div><svg style="left:1047px;top:643px;" width="12" height="10" viewBox="0 0 12 10" fill="none"><path d="M0.700 0.600h2v2h-2zM4.700 0.600h2v2h-2zM8.700 0.600h2v2h-2z" stroke="#0054a6" stroke-width="1" fill="#dfe9f5"/><path d="M0.500 4.400l5.200 4.700l5.200-4.700" stroke="#0054a6" stroke-width="1.100" fill="none"/></svg><span class="t" id="t86" style="top:621.04px;font-size:12px;line-height:16px;color:#124fa2;left:1077px;transform:scaleX(0.9760);transform-origin:0 0;">Cenová skupina</span><div style="left:1070px;top:636px;width:102px;height:23px;background:#ffffe1;border:1px solid #00aeef;box-sizing:border-box;"></div><span class="t" id="t87" style="top:640.00px;font-size:13px;line-height:17px;color:#000;left:1073px;transform:scaleX(0.8838);transform-origin:0 0;">KAT</span><svg style="left:1155px;top:643px;" width="12" height="10" viewBox="0 0 12 10" fill="none"><path d="M0.700 0.600h2v2h-2zM4.700 0.600h2v2h-2zM8.700 0.600h2v2h-2z" stroke="#0054a6" stroke-width="1" fill="#dfe9f5"/><path d="M0.500 4.400l5.200 4.700l5.200-4.700" stroke="#0054a6" stroke-width="1.100" fill="none"/></svg><span class="t" id="t88" style="top:665.04px;font-size:12px;line-height:16px;color:#124fa2;left:968px;transform:scaleX(0.9799);transform-origin:0 0;">Typ plánu</span><div style="left:961px;top:680px;width:103px;height:23px;background:#ffffe1;border:1px solid #00aeef;box-sizing:border-box;"></div><svg style="left:1047px;top:687px;" width="12" height="10" viewBox="0 0 12 10" fill="none"><path d="M0.700 0.600h2v2h-2zM4.700 0.600h2v2h-2zM8.700 0.600h2v2h-2z" stroke="#0054a6" stroke-width="1" fill="#dfe9f5"/><path d="M0.500 4.400l5.200 4.700l5.200-4.700" stroke="#0054a6" stroke-width="1.100" fill="none"/></svg><span class="t" id="t89" style="top:665.04px;font-size:12px;line-height:16px;color:#124fa2;left:1077px;transform:scaleX(0.9686);transform-origin:0 0;">Nastavení pok...</span><div style="left:1070px;top:680px;width:102px;height:23px;background:#ffffe1;border:1px solid #00aeef;box-sizing:border-box;"></div><span class="t" id="t90" style="top:684.00px;font-size:13px;line-height:17px;color:#000;left:1073px;"> </span><svg style="left:1155px;top:687px;" width="14" height="10" viewBox="0 0 14 10" fill="none"><path d="M0.200 0.700h11M0.200 2.600h11" stroke="#0054a6" stroke-width="1"/><path d="M0.400 4.300l5.300 4.800l5.300-4.800" stroke="#0054a6" stroke-width="1.200" fill="none"/></svg><span class="t" id="t91" style="top:709.04px;font-size:12px;line-height:16px;color:#124fa2;left:968px;transform:scaleX(0.9576);transform-origin:0 0;">Jazyk pro zobrazení a editaci dat</span><div style="left:961px;top:724px;width:211px;height:23px;background:#ffffe1;border:1px solid #00aeef;box-sizing:border-box;"></div><span class="t" id="t92" style="top:728.00px;font-size:13px;line-height:17px;color:#000;left:964px;transform:scaleX(1.0083);transform-origin:0 0;">implicitní</span><svg style="left:1155px;top:731px;" width="12" height="10" viewBox="0 0 12 10" fill="none"><path d="M0.700 0.600h2v2h-2zM4.700 0.600h2v2h-2zM8.700 0.600h2v2h-2z" stroke="#0054a6" stroke-width="1" fill="#dfe9f5"/><path d="M0.500 4.400l5.200 4.700l5.200-4.700" stroke="#0054a6" stroke-width="1.100" fill="none"/></svg></div></body></html>
